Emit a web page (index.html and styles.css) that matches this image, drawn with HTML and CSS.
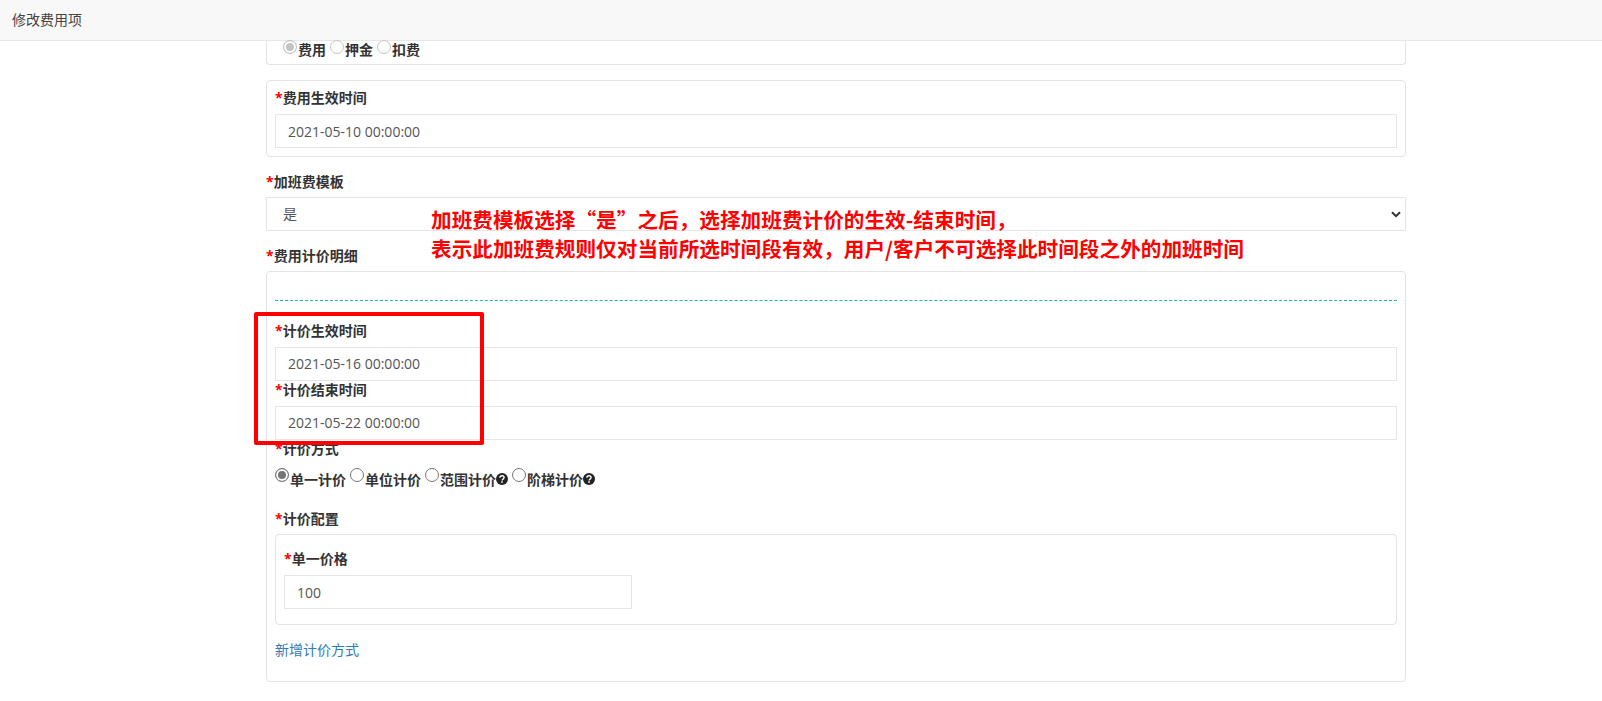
FILE: index.html
```html
<!DOCTYPE html>
<html lang="zh-CN">
<head>
<meta charset="utf-8">
<title>修改费用项</title>
<link rel="stylesheet" href="styles.css">
</head>
<body>
<header class="topbar">修改费用项</header>
<main class="form">
  <section class="card card-clipped">
    <div class="radios radios-disabled">
      <span class="radio checked"></span><span class="radio-text">费用</span>
      <span class="radio"></span><span class="radio-text">押金</span>
      <span class="radio"></span><span class="radio-text">扣费</span>
    </div>
  </section>
  <section class="card card-time">
    <div class="label"><i>*</i>费用生效时间</div>
    <div class="input input-low">2021-05-10 00:00:00</div>
  </section>
  <div class="label label-outer"><i>*</i>加班费模板</div>
  <div class="input select">是
    <svg class="chev" width="10" height="7" viewBox="0 0 10 7"><path d="M1 1.2l4 4 4-4" fill="none" stroke="#333" stroke-width="2"/></svg>
  </div>
  <div class="label label-detail"><i>*</i>费用计价明细</div>
  <section class="card card-detail">
    <div class="dashed"></div>
    <div class="label"><i>*</i>计价生效时间</div>
    <div class="input">2021-05-16 00:00:00</div>
    <div class="label"><i>*</i>计价结束时间</div>
    <div class="input">2021-05-22 00:00:00</div>
    <div class="label"><i>*</i>计价方式</div>
    <div class="radios radios-method">
      <span class="radio checked"></span><span class="radio-text">单一计价</span>
      <span class="radio"></span><span class="radio-text">单位计价</span>
      <span class="radio"></span><span class="radio-text">范围计价</span><svg class="help" viewBox="0 0 12 12" width="12" height="12"><circle cx="6" cy="6" r="6" fill="#222"/><path d="M3.9 4.7c0-1.2 1-1.9 2.1-1.9s2.1.7 2.1 1.8c0 1.5-2 1.5-2 2.8" fill="none" stroke="#fff" stroke-width="1.4"/><rect x="5.2" y="8.3" width="1.6" height="1.5" fill="#fff"/></svg>
      <span class="radio"></span><span class="radio-text">阶梯计价</span><svg class="help" viewBox="0 0 12 12" width="12" height="12"><circle cx="6" cy="6" r="6" fill="#222"/><path d="M3.9 4.7c0-1.2 1-1.9 2.1-1.9s2.1.7 2.1 1.8c0 1.5-2 1.5-2 2.8" fill="none" stroke="#fff" stroke-width="1.4"/><rect x="5.2" y="8.3" width="1.6" height="1.5" fill="#fff"/></svg>
    </div>
    <div class="label label-config"><i>*</i>计价配置</div>
    <section class="card card-price">
      <div class="label"><i>*</i>单一价格</div>
      <div class="input input-price input-low">100</div>
    </section>
    <a class="add-link" href="#">新增计价方式</a>
  </section>
</main>
<div class="note">
  <p>加班费模板选择“是”之后，选择加班费计价的生效-结束时间，</p>
  <p>表示此加班费规则仅对当前所选时间段有效，用户/客户不可选择此时间段之外的加班时间</p>
</div>
<div class="highlight"></div>
</body>
</html>
```

FILE: styles.css
```css
* { box-sizing: border-box; }
html, body { margin: 0; height: 701px; overflow: hidden; background: #fff; }
body {
  position: relative;
  font-family: "Open Sans", "Noto Sans CJK SC", sans-serif;
  font-size: 14px;
  color: #333;
}
.topbar {
  height: 41px;
  padding: 0 12px;
  line-height: 40px;
  background: #f8f8f8;
  border-bottom: 1px solid #e7e7e7;
  color: #444;
}
.form { width: 1140px; margin-left: 266px; }
.card {
  border: 1px solid #e3e3e3;
  border-radius: 4px;
  padding: 8px;
}
.card-clipped {
  height: 25px;
  padding: 0 8px 0 16px;
  border-top: 0;
  border-radius: 0 0 4px 4px;
}
.card-time { margin-top: 15px; height: 77px; }
.label {
  height: 25px;
  line-height: 18px;
  font-weight: 700;
  color: #333;
}
.label i { color: #f00; font-style: normal; }
.input {
  height: 34px;
  padding: 0 12px;
  line-height: 32px;
  border: 1px solid #e5e5e5;
  color: #555;
  background: #fff;
}
.input-low { line-height: 33px; }
.label-outer { margin-top: 15px; line-height: 20px; }
.select { position: relative; padding-left: 16px; }
.chev { position: absolute; right: 4px; top: 13px; }
.label-detail { margin-top: 15px; line-height: 20px; }
.card-detail { height: 411px; padding-top: 0; }
.dashed { margin-top: 28px; margin-bottom: 21px; border-top: 1px dashed #1abc9c; }
.radios { display: flex; align-items: flex-start; font-weight: 700; }
.radio {
  flex: none;
  width: 14px;
  height: 14px;
  margin-right: 1px;
  border: 1px solid #767676;
  border-radius: 50%;
  background: #fff;
}
.radio.checked { background: #767676; box-shadow: inset 0 0 0 2px #fff; }
.radio-text { margin-right: 4px; line-height: 18px; margin-top: 1px; }
.radios-disabled { margin-top: -1px; }
.radios-disabled .radio { border-color: #c4c4c4; }
.radios-disabled .radio.checked { background: #c4c4c4; }
.radios-method { margin-top: 3px; height: 42px; }
.radios-method .radio-text { margin-top: 3px; }
.help { flex: none; margin: 5px 4px 0 0; }
.radios-method .radio-text:has(+ .help) { margin-right: 0; }
.label-config { height: 24px; }
.card-price { height: 91px; padding-top: 15px; }
.input-price { width: 348px; }
.add-link { display: block; margin-top: 16px; color: #337ab7; text-decoration: none; line-height: 18px; }
.note {
  position: absolute;
  left: 431px;
  top: 205px;
  color: #f00;
  font-size: 20.65px;
  font-weight: 700;
  font-family: "Noto Sans CJK SC", sans-serif;
  line-height: 29px;
  white-space: nowrap;
}
.note p { margin: 0; }
.highlight {
  position: absolute;
  left: 254px;
  top: 312px;
  width: 230px;
  height: 133px;
  border: 4px solid #f00;
  border-radius: 2px;
}
```
